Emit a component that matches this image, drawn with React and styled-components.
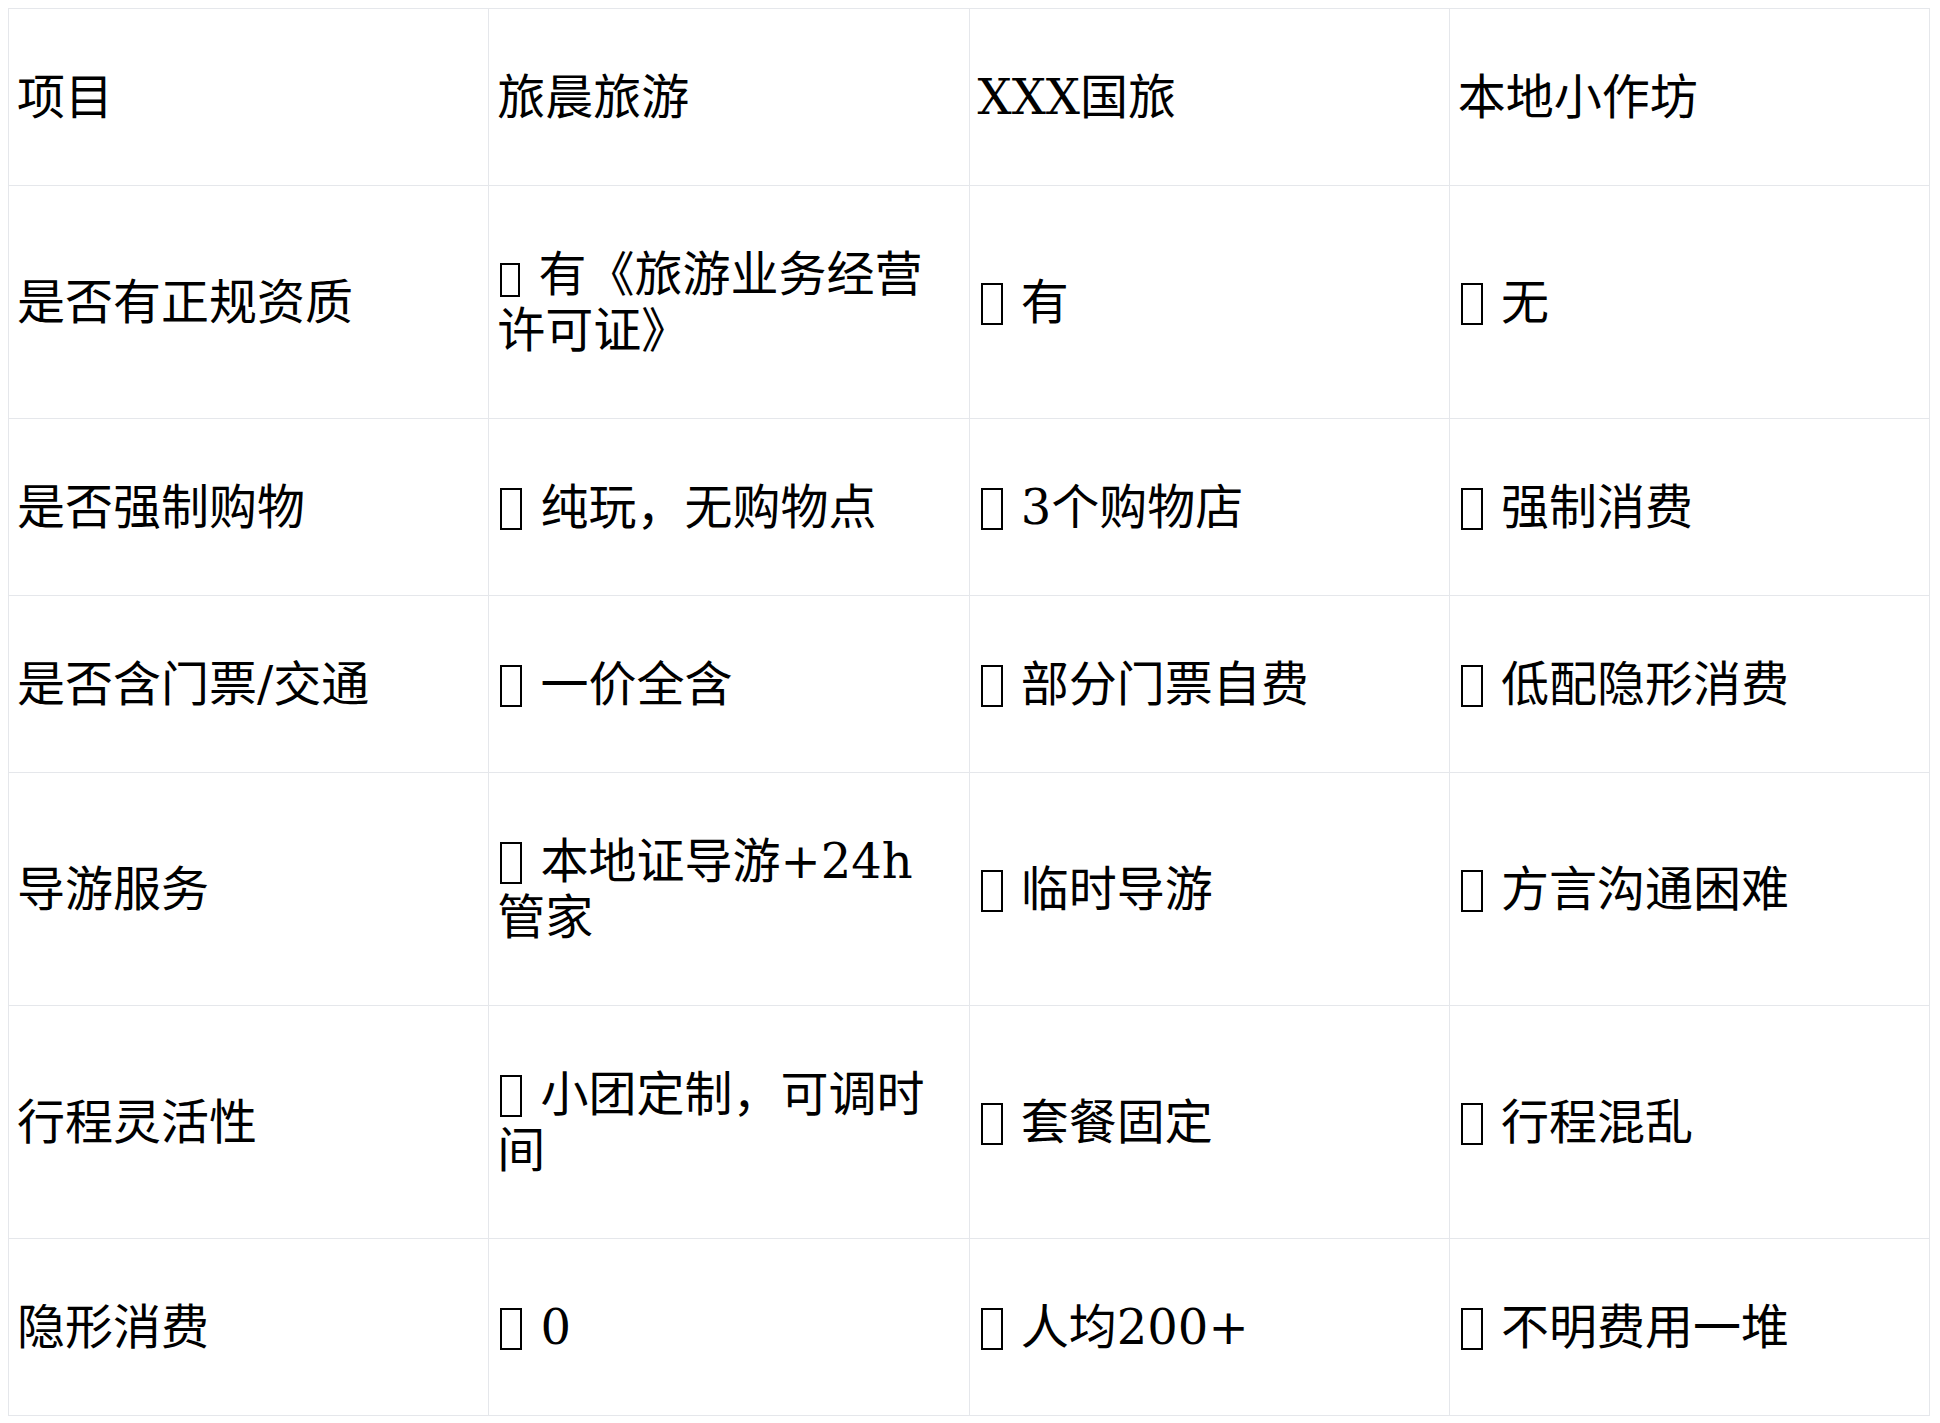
import React from 'react'
import styled, { createGlobalStyle } from 'styled-components'

const GlobalStyle = createGlobalStyle`
  body {
    margin: 8px;
    background: #fff;
    color: #000;
  }
`

const Table = styled.table`
  width: 1922px;
  table-layout: fixed;
  border-collapse: collapse;
  font-family: "DejaVu Serif", "Noto Sans CJK SC", serif;
  font-size: 48px;
  line-height: 56px;
  color: #000;
`

const Cell = styled.td`
  padding: 60px 16px 60px 8px;
  border: 1px solid #e5e7eb;
  vertical-align: middle;
  text-align: left;
  font-weight: normal;
`

// missing-glyph box that stands in front of each answer
const Tofu = styled.span`
  display: inline-block;
  box-sizing: border-box;
  width: ${p => (p.$small ? '20px' : '22px')};
  height: ${p => (p.$small ? '34px' : '42px')};
  margin: 0 3px;
  border: 2px solid #000;
  vertical-align: -6px;
`

const header = ['项目', '旅晨旅游', 'XXX国旅', '本地小作坊']

const rows = [
  ['是否有正规资质', { t: '有《旅游业务经营许可证》', small: true }, { t: '有' }, { t: '无' }],
  ['是否强制购物', { t: '纯玩，无购物点' }, { t: '3个购物店' }, { t: '强制消费' }],
  ['是否含门票/交通', { t: '一价全含' }, { t: '部分门票自费' }, { t: '低配隐形消费' }],
  ['导游服务', { t: '本地证导游+24h管家' }, { t: '临时导游' }, { t: '方言沟通困难' }],
  ['行程灵活性', { t: '小团定制，可调时间' }, { t: '套餐固定' }, { t: '行程混乱' }],
  ['隐形消费', { t: '0' }, { t: '人均200+' }, { t: '不明费用一堆' }],
]

const App = () => {
  return (
    <>
      <GlobalStyle />
      <Table>
        <tbody>
          <tr>
            {header.map((h, i) => (
              <Cell key={i}>{h}</Cell>
            ))}
          </tr>
          {rows.map((row, r) => (
            <tr key={r}>
              <Cell>{row[0]}</Cell>
              {row.slice(1).map((c, i) => (
                <Cell key={i}>
                  <Tofu $small={c.small} aria-hidden="true" /> {c.t}
                </Cell>
              ))}
            </tr>
          ))}
        </tbody>
      </Table>
    </>
  )
}

export default App
